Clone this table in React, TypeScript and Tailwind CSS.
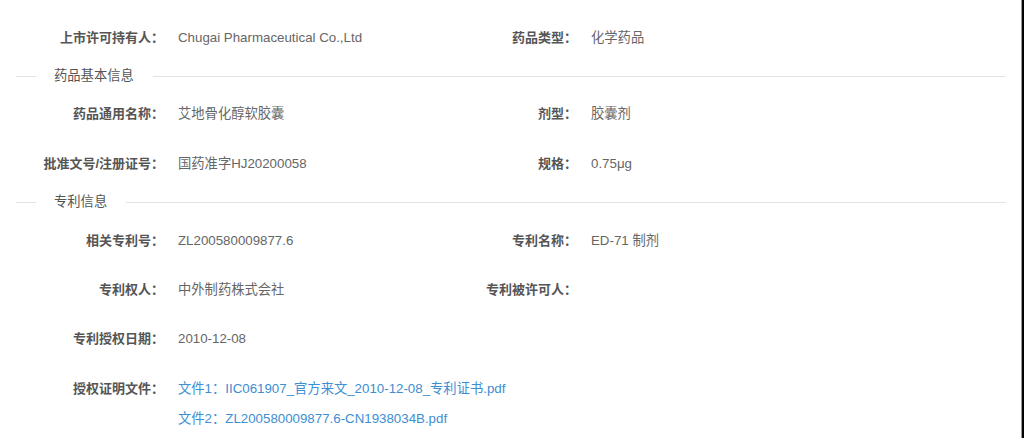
import React from "react";

const font = { fontFamily: '"Liberation Sans", "Noto Sans CJK SC", sans-serif' };

function Label({ children }: { children: React.ReactNode }) {
  return (
    <div className="w-[164px] shrink-0 text-right text-[13px] font-bold text-[#555555]">{children}</div>
  );
}

function Value({ children }: { children?: React.ReactNode }) {
  return <div className="pl-[14px] text-[13.3px] text-[#666666] whitespace-nowrap">{children}</div>;
}

function Row({
  h,
  l1,
  v1,
  l2,
  v2,
}: {
  h: string;
  l1: string;
  v1: string;
  l2?: string;
  v2?: string;
}) {
  return (
    <div className={`flex items-center ${h}`}>
      <div className="flex w-[413px] shrink-0 items-center">
        <Label>{l1}</Label>
        <Value>{v1}</Value>
      </div>
      {l2 !== undefined && (
        <div className="flex items-center">
          <Label>{l2}</Label>
          <Value>{v2}</Value>
        </div>
      )}
    </div>
  );
}

function Header({ h, title }: { h: string; title: string }) {
  return (
    <div className={`flex items-center ${h}`}>
      <div className="ml-[16px] h-px w-[20px] bg-[#e3e3e3]" />
      <div className="pl-[18px] pr-[19px] text-[13.3px] text-[#555555] leading-none">{title}</div>
      <div className="mr-[15px] h-px flex-1 bg-[#e3e3e3]" />
    </div>
  );
}

export default function App() {
  return (
    <div className="flex h-[438px] w-[1024px] overflow-hidden bg-white" style={font}>
      <div className="flex flex-1 flex-col pt-[14px]">
        <Row h="h-[48px]" l1="上市许可持有人：" v1="Chugai Pharmaceutical Co.,Ltd" l2="药品类型：" v2="化学药品" />
        <Header h="h-[28px]" title="药品基本信息" />
        <Row h="h-[48px]" l1="药品通用名称：" v1="艾地骨化醇软胶囊" l2="剂型：" v2="胶囊剂" />
        <Row h="h-[52px]" l1="批准文号/注册证号：" v1="国药准字HJ20200058" l2="规格：" v2="0.75μg" />
        <Header h="h-[24px]" title="专利信息" />
        <Row h="h-[54px]" l1="相关专利号：" v1="ZL200580009877.6" l2="专利名称：" v2="ED-71 制剂" />
        <Row h="h-[44px]" l1="专利权人：" v1="中外制药株式会社" l2="专利被许可人：" v2="" />
        <Row h="h-[54px]" l1="专利授权日期：" v1="2010-12-08" />
        <div className="flex items-start pt-[12px]">
          <Label>
            <span className="block leading-[22px]">授权证明文件：</span>
          </Label>
          <div className="flex flex-col pl-[14px] text-[13.3px] text-[#3d8ed2]">
            <a className="block leading-[22px] whitespace-nowrap">文件1：IIC061907_官方来文_2010-12-08_专利证书.pdf</a>
            <a className="mt-[8px] block leading-[22px] whitespace-nowrap">文件2：ZL200580009877.6-CN1938034B.pdf</a>
          </div>
        </div>
      </div>
      <div className="w-[1px] bg-[#9a9a9a]" />
      <div className="w-[2px] bg-black" />
    </div>
  );
}
